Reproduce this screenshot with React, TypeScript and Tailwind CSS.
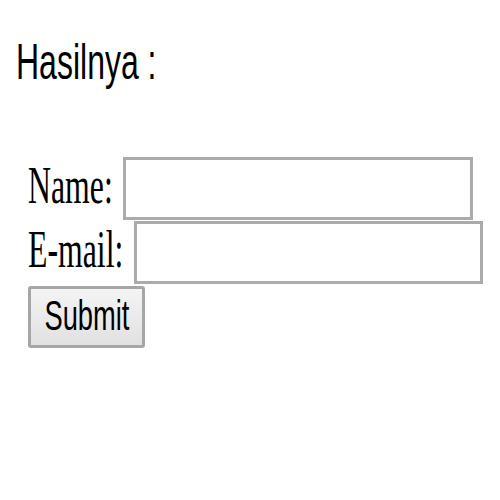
import React from 'react';

export default function App() {
  return (
    <div className="w-[500px] h-[500px] bg-white overflow-hidden">
      <div className="pt-[37px] pl-[16px]">
        <span className="inline-block origin-left scale-x-[0.64] whitespace-nowrap text-[50px] leading-none text-black" style={{ fontFamily: '"Liberation Sans", Arial, sans-serif' }}>
          Hasilnya :
        </span>
      </div>

      <form className="mt-[70px] pl-[28px] flex flex-col" onSubmit={(e) => e.preventDefault()} style={{ fontFamily: '"Liberation Serif", "Times New Roman", serif' }}>
        <div className="flex items-start">
          <label className="w-[95px] mt-[2px] shrink-0">
            <span className="inline-block origin-left scale-x-[0.6] whitespace-nowrap text-[53px] leading-none text-black">Name:</span>
          </label>
          <input type="text" className="w-[350px] h-[63px] border-[3px] border-[#ababab] bg-white outline-none" />
        </div>
        <div className="flex items-start mt-[1px]">
          <label className="w-[106px] mt-[2px] shrink-0">
            <span className="inline-block origin-left scale-x-[0.6] whitespace-nowrap text-[53px] leading-none text-black">E-mail:</span>
          </label>
          <input type="email" className="w-[349px] h-[63px] border-[3px] border-[#ababab] bg-white outline-none" />
        </div>
        <div className="mt-[2px]">
          <button type="submit" className="w-[117px] h-[62px] flex items-center justify-center rounded-[3px] border-[3px] border-[#a6a6a6] bg-gradient-to-b from-[#f4f4f4] to-[#e1e1e1]">
            <span className="inline-block scale-x-[0.635] whitespace-nowrap text-[43px] leading-none text-black -mt-[4px]" style={{ fontFamily: '"Liberation Sans", Arial, sans-serif' }}>
              Submit
            </span>
          </button>
        </div>
      </form>
    </div>
  );
}
